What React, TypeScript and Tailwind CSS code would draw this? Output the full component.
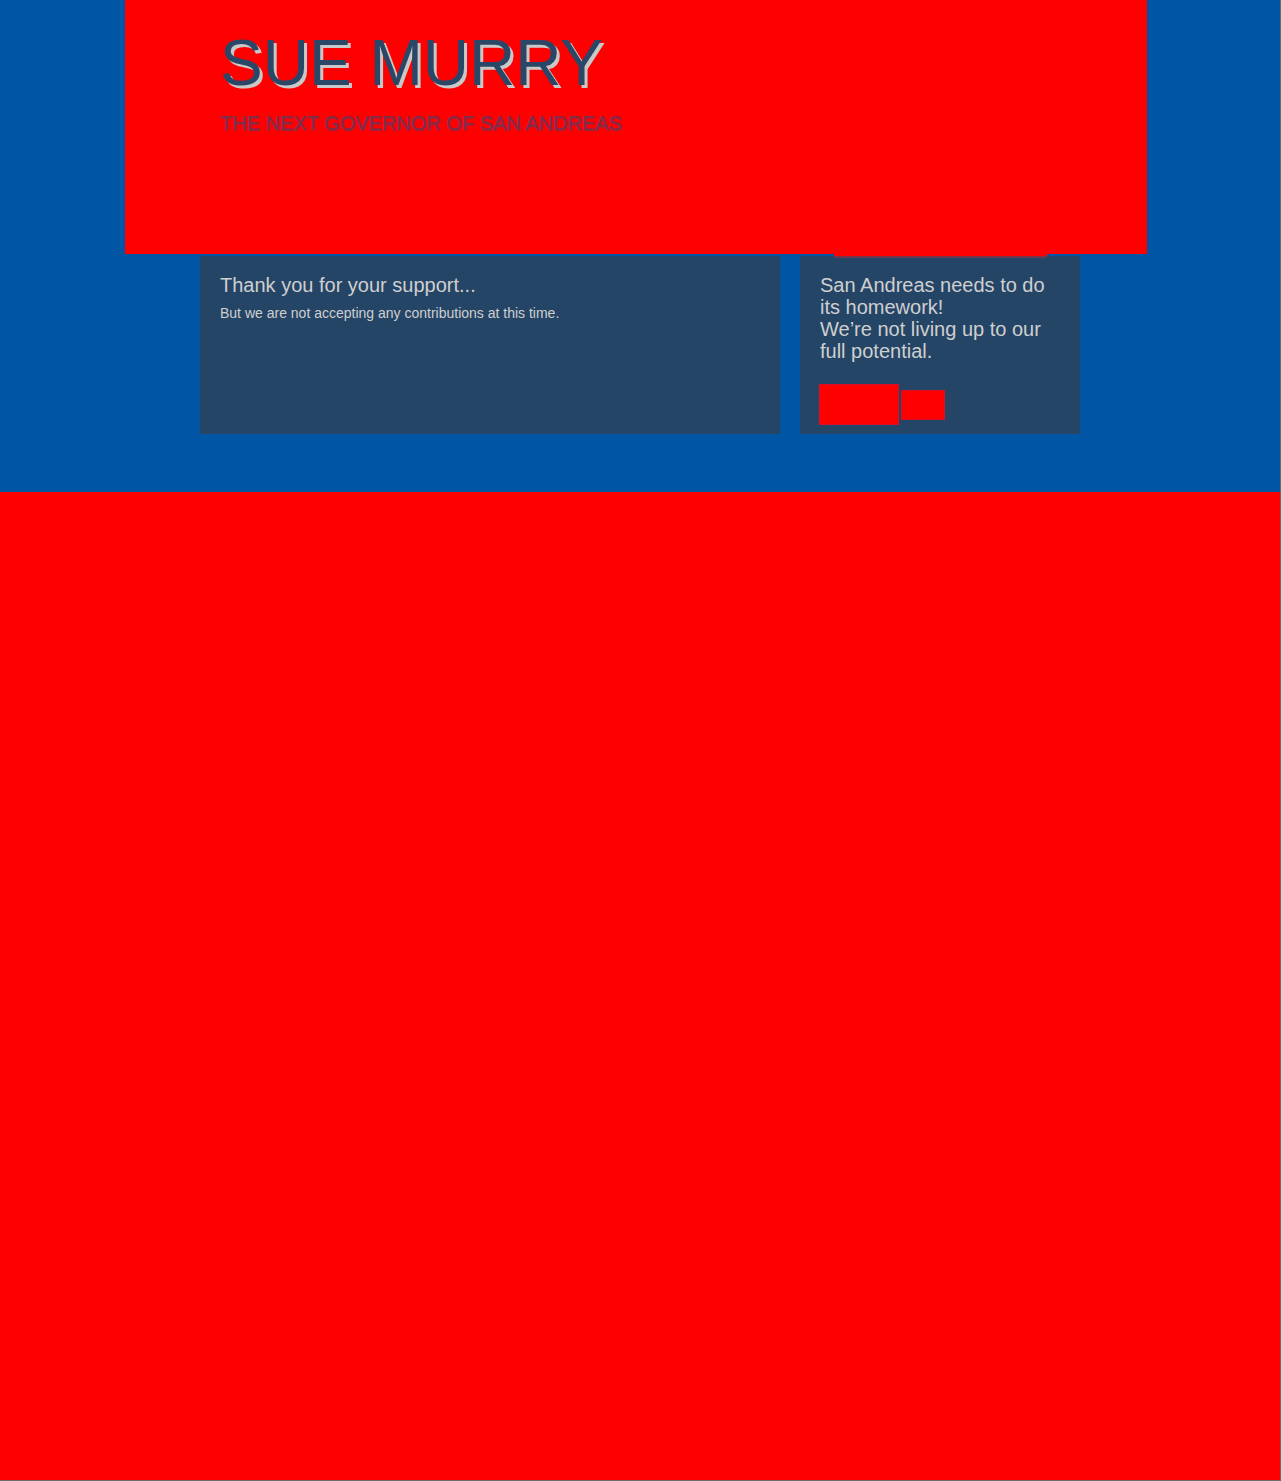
import * as React from "react";

const font = { fontFamily: '"Liberation Sans", Arial, sans-serif' };

export default function App() {
  return (
    <div className="w-[1281px] h-[1481px] bg-[#6b6b6b]" style={font}>
      <div className="w-[1280px] h-[1480px] bg-[#ff0000] flex flex-col">
        {/* blue hero */}
        <section className="relative h-[492px] bg-[#0055a5] flex flex-col">
          <header className="ml-[125px] w-[1022px] h-[254px] bg-[#ff0000] pl-[95px] pt-[31px]">
            <h1
              className="text-[64px] leading-[64px] text-[#2b4768]"
              style={{ textShadow: "3px 3px 0 #c8c8c8" }}
            >
              SUE MURRY
            </h1>
            <p
              className="mt-[16px] text-[20px] leading-[24px] text-[#7e2c4a]"
              style={{ textShadow: "1px 1px 1px #8c2a44" }}
            >
              THE NEXT GOVERNOR OF SAN ANDREAS
            </p>
          </header>

          <div className="mt-[2px] ml-[200px] flex gap-5">
            <div className="w-[580px] h-[178px] bg-[#254567] px-5 pt-[18px] text-[#cfcfcf]">
              <h3 className="text-[20px] leading-[22px]">Thank you for your support...</h3>
              <p className="mt-[7px] text-[14px] leading-[20px]">
                But we are not accepting any contributions at this time.
              </p>
            </div>
            <div className="w-[280px] h-[178px] bg-[#254567] px-5 pt-[18px] text-[#cfcfcf]">
              <p className="text-[20px] leading-[22px]">
                San Andreas needs to do its homework!
                <br />
                We’re not living up to our full potential.
              </p>
              <div className="mt-[22px] flex items-center gap-[2px] -ml-px">
                <button className="w-[80px] h-[41px] bg-[#ff0000] border border-[#d8102a]" />
                <button className="w-[44px] h-[30px] bg-[#ff0000] border border-[#d8102a]" />
              </div>
            </div>
          </div>

          {/* red tab over the right card */}
          <div className="absolute left-[834px] top-[250px] w-[213px] h-[8px] bg-[#ff0000] border-b-2 border-[#74354f]" />
        </section>
      </div>
    </div>
  );
}
